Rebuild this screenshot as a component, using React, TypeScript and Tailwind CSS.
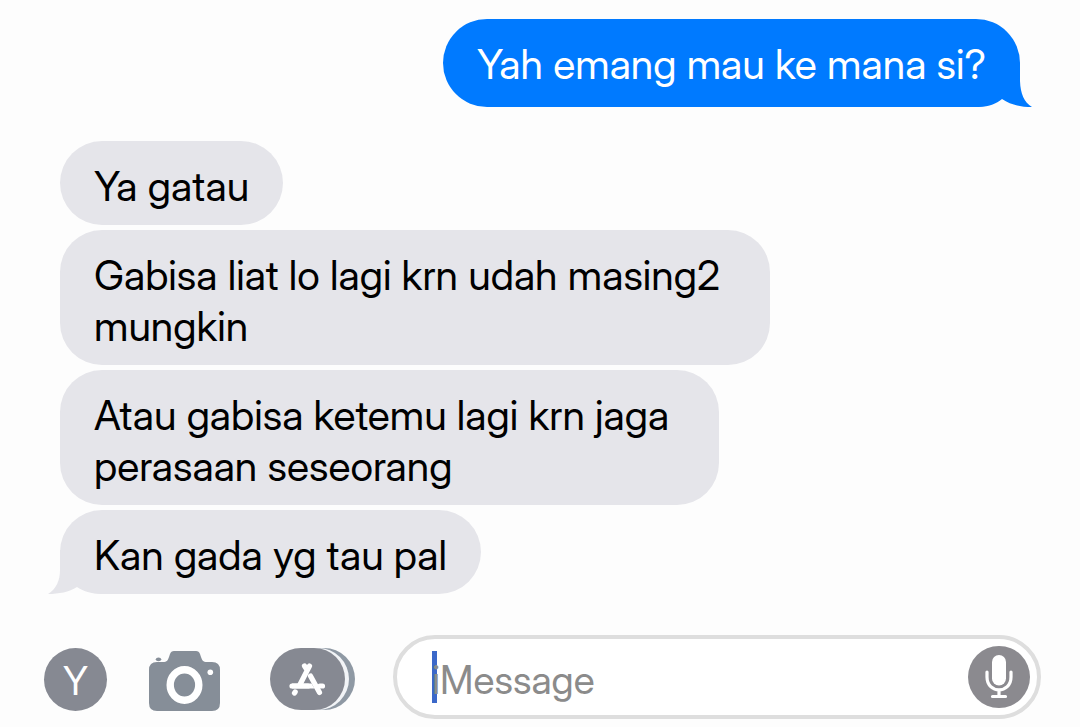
import type { ReactNode } from "react";

type BubbleProps = { children: ReactNode; multiline?: boolean; tail?: boolean };

function ReceivedBubble({ children, multiline = false, tail = false }: BubbleProps) {
  return (
    <li
      className={`relative w-fit rounded-[42px] bg-[#e5e5ea] pt-[20px] pb-[13px] pl-[34px] text-black ${
        multiline ? "pr-[50px]" : "pr-[34px]"
      }`}
    >
      {tail && (
        <svg
          className="absolute bottom-0 -left-[12px] h-[44px] w-[60px] fill-[#e5e5ea]"
          viewBox="0 0 60 44"
          aria-hidden="true"
        >
          <path d="M12 0V20C12 31 8 39 0 44C11 44 21 42 29 37C35 41 43 44 54 44H60V0Z" />
        </svg>
      )}
      <p className="relative">{children}</p>
    </li>
  );
}

function SentBubble({ children }: { children: ReactNode }) {
  return (
    <li className="relative w-fit self-end rounded-[44px] bg-[#007aff] px-[34px] pt-[20px] pb-[17px] text-white">
      <svg
        className="absolute -right-[12px] bottom-0 h-[44px] w-[60px] fill-[#007aff]"
        viewBox="0 0 60 44"
        aria-hidden="true"
      >
        <path d="M48 0V18C48.500 31 52 39 60 44C49 44 39 42 30 36C25 40 18 44 6 44H0V0Z" />
      </svg>
      <p className="relative">{children}</p>
    </li>
  );
}

function CameraIcon() {
  return (
    <svg className="h-[60px] w-[71px]" viewBox="0 0 71 60" fill="#868e98" aria-hidden="true">
      <path d="M8 11H14C18 11 19 9 20 6L21 3Q22 0 25 0H47Q50 0 51 3L52 6C53 9 54 11 58 11H63Q71 11 71 19V52Q71 60 63 60H8Q0 60 0 52V19Q0 11 8 11Z" />
      <ellipse cx="9.5" cy="8.3" rx="2.7" ry="1.9" />
      <ellipse cx="35.5" cy="34" rx="14.3" ry="15.2" stroke="#fff" strokeWidth="7.4" />
      <circle cx="61.3" cy="21.3" r="2.8" fill="#fff" />
    </svg>
  );
}

function AppStoreIcon() {
  return (
    <svg className="h-[62px] w-[85px]" viewBox="0 0 85 62" aria-hidden="true">
      <rect x="10" width="75" height="62" rx="31" fill="#8f99a4" />
      <rect x="3" width="76" height="62" rx="31" fill="#f2f4f7" />
      <rect width="75" height="62" rx="31" fill="#868992" />
      <g fill="none" stroke="#fff" strokeWidth="5.2" strokeLinecap="round">
        <path d="M34.500 18L36.500 21M39.500 18L30 36.500" />
        <path d="M40.500 28L49.500 44.500" />
        <path d="M22 38H38M50 38H52.500" />
        <path d="M25.200 44L24.500 45" />
      </g>
      <path d="M22 35.400H41.500L44.500 40.600H22Z" fill="#fff" />
    </svg>
  );
}

function MicIcon() {
  return (
    <svg className="size-[62px]" viewBox="0 0 62 62" aria-hidden="true">
      <circle cx="31" cy="31" r="31" fill="#8b8a8f" />
      <rect x="24" y="9" width="14" height="30.5" rx="7" fill="#fff" />
      <path
        d="M19 26V31C19 48 43 48 43 31V26M31 44V50.500M24.500 50.500H37.500"
        fill="none"
        stroke="#fff"
        strokeWidth="3.2"
        strokeLinecap="round"
      />
    </svg>
  );
}

export default function App() {
  return (
    <main className="flex min-h-screen flex-col bg-[#fdfdfd] font-['Inter_Display','Inter',sans-serif] text-[41px] leading-[51px]">
      <ul className="flex flex-1 flex-col gap-[5px] px-[60px] pt-[19px] [&>li:first-child]:mb-[29px]">
        <SentBubble>Yah emang mau ke mana si?</SentBubble>
        <ReceivedBubble>Ya gatau</ReceivedBubble>
        <ReceivedBubble multiline>
          Gabisa liat lo lagi krn udah masing2
          <br />
          mungkin
        </ReceivedBubble>
        <ReceivedBubble multiline>
          Atau gabisa ketemu lagi krn jaga
          <br />
          perasaan seseorang
        </ReceivedBubble>
        <ReceivedBubble tail>Kan gada yg tau pal</ReceivedBubble>
      </ul>

      <form className="flex items-center pr-[39px] pb-[8px] pl-[44px]">
        <div className="flex shrink-0 items-center pt-[4px]">
          <button
            type="button"
            aria-label="Profile"
            className="flex size-[63px] items-center justify-center rounded-full bg-[#868992] pt-[2px] text-[39px] text-white"
          >
            Y
          </button>
          <button type="button" aria-label="Camera" className="ml-[42px] pt-[3px]">
            <CameraIcon />
          </button>
          <button type="button" aria-label="Apps" className="ml-[50px]">
            <AppStoreIcon />
          </button>
        </div>
        <div className="relative ml-[38px] flex h-[84px] min-w-0 flex-1 items-center rounded-full border-4 border-[#dedede] bg-white pr-[7px] pl-[35px]">
          <span className="absolute top-[12px] left-[35px] h-[52px] w-[5px] bg-[#3b68c9]" />
          <input
            type="text"
            aria-label="Message"
            placeholder="iMessage"
            className="relative min-w-0 flex-1 bg-transparent pt-[4px] text-[39px] text-black outline-none placeholder:text-[#8b8b8b]"
          />
          <button type="button" aria-label="Record audio" className="shrink-0">
            <MicIcon />
          </button>
        </div>
      </form>
    </main>
  );
}
